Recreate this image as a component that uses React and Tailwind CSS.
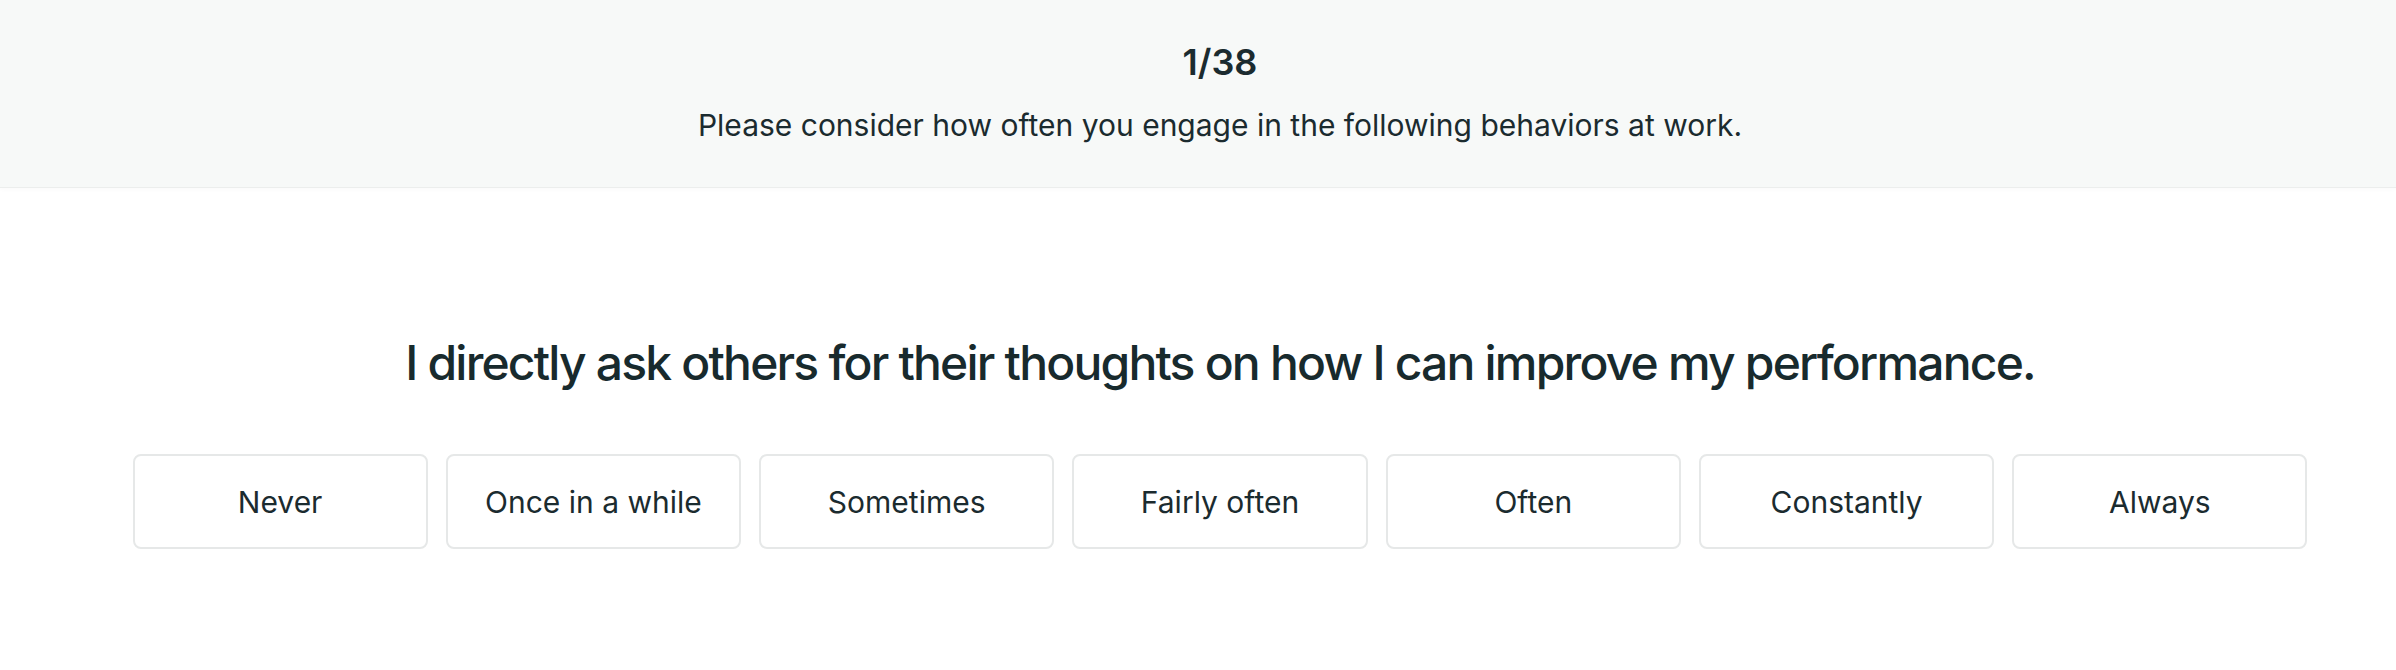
import React from "react";

const options = ["Never", "Once in a while", "Sometimes", "Fairly often", "Often", "Constantly", "Always"];

export default function App() {
  return (
    <div className="min-h-screen bg-white text-[#1b2b2f]" style={{ fontFamily: "Inter, 'Noto Sans', sans-serif" }}>
      <header className="h-[188px] bg-[#f7f9f8] border-b border-[#eceeed] shadow-[0_2px_4px_rgba(0,0,0,0.02)] flex flex-col items-center pl-[44px]">
        <div className="pt-[40px] text-[36px] leading-[44px] font-semibold">1/38</div>
        <div className="mt-[21px] text-[30px] leading-[40px]">
          Please consider how often you engage in the following behaviors at work.
        </div>
      </header>
      <main className="pl-[44px]">
        <h1 className="mt-[146px] text-center text-[48px] leading-[58px] font-medium tracking-[-1.8px] text-[#182a2d]">
          I directly ask others for their thoughts on how I can improve my performance.
        </h1>
        <div className="mx-auto mt-[62px] w-[2175px] flex gap-[18px]">
          {options.map((o) => (
            <button
              key={o}
              className="flex-1 h-[95px] rounded-lg border-2 border-[#e6e8e8] bg-white text-[30px] leading-[40px] flex items-center justify-center text-[#1b2b2f]"
            >
              {o}
            </button>
          ))}
        </div>
      </main>
    </div>
  );
}
